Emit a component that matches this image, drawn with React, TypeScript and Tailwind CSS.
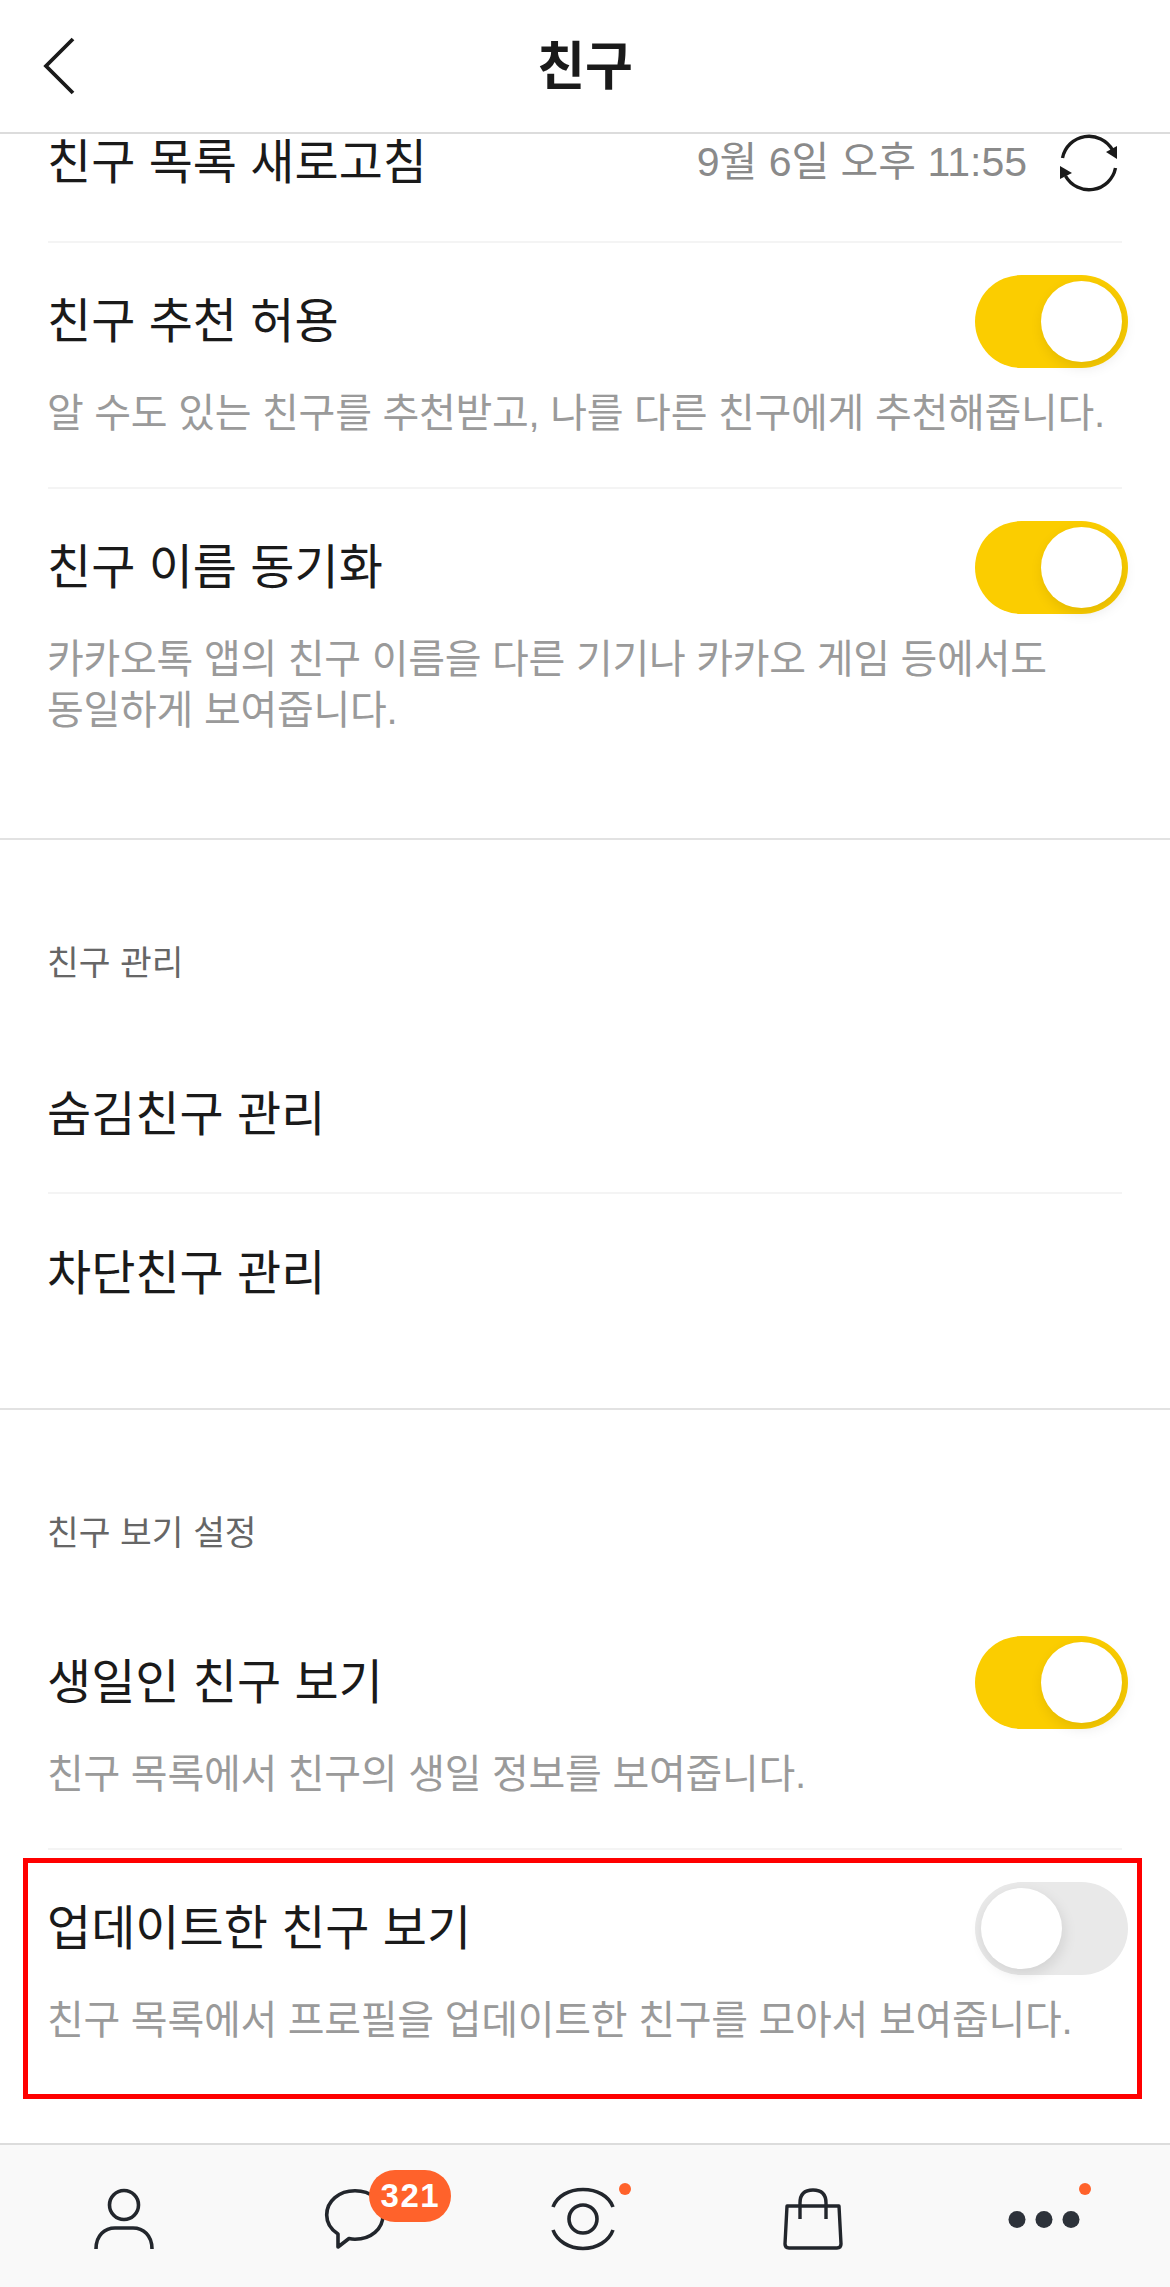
function Toggle({ on }: { on: boolean }) {
  return (
    <div
      className={
        on
          ? "flex justify-end w-[153px] h-[93px] rounded-full bg-[#fbcd00] p-[6px] -mr-[6px] shrink-0"
          : "flex justify-start w-[153px] h-[93px] rounded-full bg-[#e9e9e9] p-[6px] -mr-[6px] shrink-0"
      }
    >
      <div className="w-[81px] h-[81px] rounded-full bg-white shadow-[2px_5px_14px_rgba(0,0,0,0.1)]" />
    </div>
  );
}

function ToggleRow({ title, desc, on }: { title: string; desc: string[]; on: boolean }) {
  return (
    <div>
      <div className="flex items-center justify-between h-[93px]">
        <div className="text-[48px] leading-[60px] text-[#1a1a1a] -ml-[1px]">{title}</div>
        <Toggle on={on} />
      </div>
      <div className="mt-[20px] -ml-[1px] text-[40px] leading-[51px] tracking-[-0.28px] text-[#9a9a9a]">
        {desc.map((line) => (
          <div key={line} className="whitespace-nowrap">
            {line}
          </div>
        ))}
      </div>
    </div>
  );
}

function TabPerson() {
  return (
    <svg width="80" height="80" viewBox="0 0 80 80" fill="none" stroke="#22262c" strokeWidth="3.6">
      <circle cx="40" cy="26" r="14.5" />
      <path d="M12 70C12 56 21 49 31 49H49C59 49 68 56 68 70" />
    </svg>
  );
}

function TabChat() {
  return (
    <svg width="80" height="80" viewBox="0 0 80 80" fill="none" stroke="#22262c" strokeWidth="3.6" strokeLinejoin="round">
      <path d="M40 11.7C24 11.7 11.7 22 11.7 36C11.7 44 16 50.5 23 55V68L34 59.5C36 60 38 60.2 40 60.2C56 60.2 68 50 68 36C68 22 56 11.7 40 11.7Z" />
    </svg>
  );
}

function TabView() {
  return (
    <svg width="80" height="80" viewBox="0 0 80 80" fill="none" stroke="#22262c" strokeWidth="3.6">
      <path d="M8 28C12 17 24 10.5 38 10.5C52 10.5 64 17 68 28" />
      <path d="M8 51C12 62 24 69.5 38 69.5C52 69.5 64 62 68 51" />
      <circle cx="38" cy="40" r="14" />
    </svg>
  );
}

function TabBag() {
  return (
    <svg width="80" height="80" viewBox="0 0 80 80" fill="none" stroke="#22262c" strokeWidth="3.4" strokeLinejoin="round">
      <path d="M12 27H64L66 65Q66 69 62 69H14Q10 69 10 65Z" />
      <path d="M25 40V24C25 15 30 11 38 11C46 11 51 15 51 24V40" />
    </svg>
  );
}

function TabMore() {
  return (
    <svg width="80" height="80" viewBox="0 0 80 80" fill="#2d323a">
      <circle cx="11" cy="40.5" r="8.5" />
      <circle cx="38" cy="40.5" r="8.5" />
      <circle cx="65" cy="40.5" r="8.5" />
    </svg>
  );
}

export default function App() {
  return (
    <div className="flex flex-col h-[2287px] w-[1170px] overflow-hidden bg-white font-['Liberation_Sans','Noto_Sans_CJK_KR',sans-serif]">
      {/* header */}
      <div className="grid grid-cols-3 items-center h-[134px] shrink-0 border-b-[2px] border-[#dcdcdc] pl-[42px]">
        <svg width="34" height="58" viewBox="0 0 34 58" fill="none" stroke="#1a1a1a" strokeWidth="3.8">
          <path d="M31 2L4 29L31 56" />
        </svg>
        <div className="text-center text-[52px] font-bold text-[#1a1a1a] -ml-[42px] mt-[2px]">친구</div>
      </div>

      <div className="flex-1 overflow-hidden">
        {/* first section */}
        <div className="px-12 border-b-[2px] border-[#e2e2e2]">
          <div className="flex items-center justify-between h-[109px] pb-[50px] border-b-[2px] border-[#f4f4f4]">
            <div className="text-[48px] leading-[60px] text-[#1a1a1a] -ml-[1px]">친구 목록 새로고침</div>
            <div className="flex items-center gap-[32px] mr-[3px]">
              <div className="text-[41px] text-[#8a8a8a]">9월 6일 오후 11:55</div>
              <svg width="60" height="60" viewBox="0 0 60 60" fill="none" stroke="#1a1a1a" strokeWidth="3.4">
                <path d="M3.5 25A27 27 0 0 1 53.5 17" />
                <path d="M56.5 35A27 27 0 0 1 6.5 43" />
                <path d="M47 19L58 13V26Z" fill="#1a1a1a" stroke="none" />
                <path d="M1 46V33L13 40Z" fill="#1a1a1a" stroke="none" />
              </svg>
            </div>
          </div>
          <div className="pt-[32px] pb-[48px] border-b-[2px] border-[#f4f4f4]">
            <ToggleRow
              title="친구 추천 허용"
              desc={["알 수도 있는 친구를 추천받고, 나를 다른 친구에게 추천해줍니다."]}
              on
            />
          </div>
          <div className="pt-[32px] pb-[102px]">
            <ToggleRow
              title="친구 이름 동기화"
              desc={["카카오톡 앱의 친구 이름을 다른 기기나 카카오 게임 등에서도", "동일하게 보여줍니다."]}
              on
            />
          </div>
        </div>

        {/* friend management */}
        <div className="px-12 pt-[100px] border-b-[2px] border-[#e2e2e2]">
          <div className="text-[34.5px] leading-[46px] text-[#666666] -ml-[1px]">친구 관리</div>
          <div className="h-[208px] pt-[99px] border-b-[2px] border-[#f4f4f4]">
            <div className="text-[48px] leading-[60px] text-[#1a1a1a] -ml-[1px]">숨김친구 관리</div>
          </div>
          <div className="h-[214px] pt-[50px]">
            <div className="text-[48px] leading-[60px] text-[#1a1a1a] -ml-[1px]">차단친구 관리</div>
          </div>
        </div>

        {/* friend view settings */}
        <div className="relative px-12 pt-[100px]">
          <div className="text-[34.5px] leading-[46px] text-[#666666] -ml-[1px]">친구 보기 설정</div>
          <div className="pt-[80px] h-[294px] border-b-[2px] border-[#f4f4f4]">
            <ToggleRow title="생일인 친구 보기" desc={["친구 목록에서 친구의 생일 정보를 보여줍니다."]} on />
          </div>
          <div className="pt-[32px]">
            <ToggleRow
              title="업데이트한 친구 보기"
              desc={["친구 목록에서 프로필을 업데이트한 친구를 모아서 보여줍니다."]}
              on={false}
            />
          </div>
          <div className="absolute left-[23px] top-[448px] w-[1119px] h-[241px] border-[5px] border-[#ff0000]" />
        </div>
      </div>

      {/* tab bar */}
      <div className="grid grid-cols-5 h-[144px] shrink-0 px-[9px] pt-[34px] bg-[#f9f9f9] border-t-[2px] border-[#dcdcdc]">
        <div className="flex justify-center">
          <TabPerson />
        </div>
        <div className="relative flex justify-center">
          <TabChat />
          <div className="absolute left-[130px] top-[-9px] flex items-center justify-center w-[82px] h-[52px] rounded-full bg-[#ff622b] text-[33px] font-bold tracking-[1.5px] text-white">
            321
          </div>
        </div>
        <div className="relative flex justify-center">
          <TabView />
          <div className="absolute left-[149px] top-[4px] w-[12px] h-[12px] rounded-full bg-[#ff622b]" />
        </div>
        <div className="flex justify-center">
          <TabBag />
        </div>
        <div className="relative flex justify-center">
          <TabMore />
          <div className="absolute left-[148px] top-[4px] w-[12px] h-[12px] rounded-full bg-[#ff622b]" />
        </div>
      </div>
    </div>
  );
}
